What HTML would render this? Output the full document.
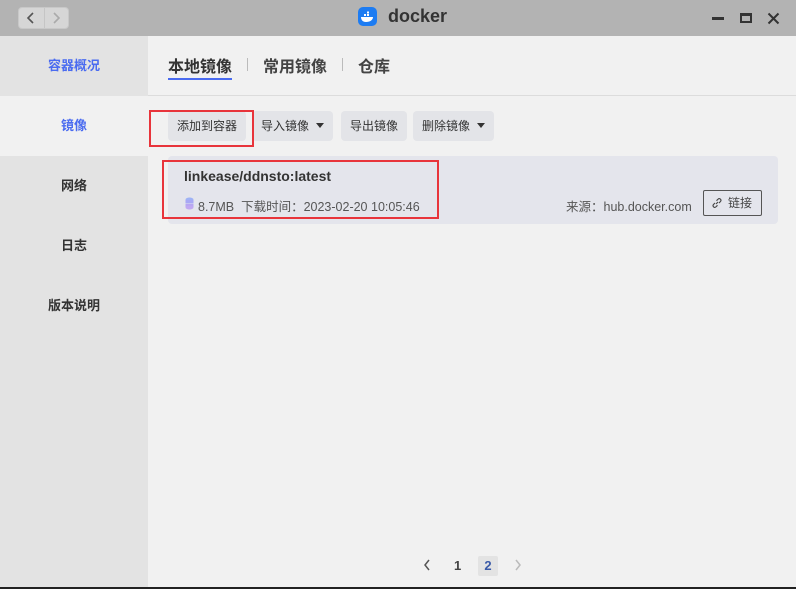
<!DOCTYPE html>
<html><head><meta charset="utf-8"><style>
*{margin:0;padding:0;box-sizing:border-box}
body{width:796px;height:589px;background:#f1f1f1;font-family:"Liberation Sans","Noto Sans CJK SC",sans-serif;position:relative;overflow:hidden;color:#333}
.abs{position:absolute}
.title{left:0;top:0;width:796px;height:36px;background:#b3b3b3}
.nav{left:18px;top:7px;width:51px;height:22px;background:#d6d6d6;border-radius:4px;border:1px solid #c8c8c8}
.side{left:0;top:36px;width:148px;height:553px;background:#e3e3e3}
.si{position:absolute;left:0;width:148px;height:60px;line-height:60px;text-align:center;font-size:13px;font-weight:bold;color:#333}
.btn{position:absolute;top:111px;height:30px;line-height:30px;background:#e3e4e8;border-radius:4px;font-size:12px;color:#333;padding:0 9px}
.tri{display:inline-block;border-left:4px solid transparent;border-right:4px solid transparent;border-top:5px solid #333;margin-left:7px;vertical-align:2px}
.red{position:absolute;border:2.5px solid #e8343b}
</style></head><body>
<div class="abs title"></div>
<div class="abs nav"><span class="abs" style="left:25px;top:0;width:1px;height:20px;background:#c5c5c5"></span>
<svg class="abs" style="left:7px;top:4px" width="10" height="12"><path d="M7 1L2 6L7 11" stroke="#555" stroke-width="1.6" fill="none"/></svg>
<svg class="abs" style="left:32px;top:4px" width="10" height="12"><path d="M3 1L8 6L3 11" stroke="#aaa" stroke-width="1.6" fill="none"/></svg></div>
<div class="abs" style="left:358px;top:7px;width:19px;height:19px;border-radius:5px;background:#1d7cf2"><svg width="19" height="19"><path d="M3 10h12c0 3-3 5-7 5s-5-3-5-5z" fill="#fff"/><rect x="6" y="7" width="2" height="2" fill="#fff"/><rect x="9" y="7" width="2" height="2" fill="#fff"/><rect x="9" y="4.5" width="2" height="2" fill="#fff"/></svg></div>
<div class="abs" style="left:388px;top:6px;font-size:18px;font-weight:bold;color:#333">docker</div>
<div class="abs" style="left:712px;top:17px;width:12px;height:2.5px;background:#333"></div>
<div class="abs" style="left:740px;top:13px;width:12px;height:10px;border:2px solid #333;border-top-width:3px"></div>
<svg class="abs" style="left:767px;top:12px" width="13" height="13"><path d="M1.5 1.5L11.5 11.5M11.5 1.5L1.5 11.5" stroke="#333" stroke-width="2"/></svg>
<div class="abs side">
<div class="si" style="top:0;color:#4a6bf0">容器概况</div>
<div class="si" style="top:60px;background:#f1f1f1;color:#4a6bf0">镜像</div>
<div class="si" style="top:120px">网络</div>
<div class="si" style="top:180px">日志</div>
<div class="si" style="top:240px">版本说明</div>
</div>
<div class="abs" style="left:168px;top:53px;font-size:16px;font-weight:bold;color:#333">本地镜像</div>
<div class="abs" style="left:168px;top:78px;width:64px;height:2px;background:#4a6bf0"></div>
<div class="abs" style="left:247px;top:58px;width:1px;height:13px;background:#bbb"></div>
<div class="abs" style="left:263px;top:53px;font-size:16px;font-weight:bold;color:#444">常用镜像</div>
<div class="abs" style="left:342px;top:58px;width:1px;height:13px;background:#bbb"></div>
<div class="abs" style="left:358px;top:53px;font-size:16px;font-weight:bold;color:#444">仓库</div>
<div class="abs" style="left:148px;top:95px;width:648px;height:1px;background:#dcdcdc"></div>
<div class="btn" style="left:168px">添加到容器</div>
<div class="btn" style="left:252px">导入镜像<span class="tri"></span></div>
<div class="btn" style="left:341px">导出镜像</div>
<div class="btn" style="left:413px">删除镜像<span class="tri"></span></div>
<div class="abs" style="left:168px;top:156px;width:610px;height:68px;background:#e4e5ec;border-radius:4px"></div>
<div class="abs" style="left:184px;top:168px;font-size:14px;font-weight:bold;color:#333">linkease/ddnsto:latest</div>
<svg class="abs" style="left:185px;top:197px" width="9" height="13"><ellipse cx="4.5" cy="2.5" rx="4" ry="2" fill="#9fb2f5"/><rect x="0.5" y="3" width="8" height="3.5" fill="#a8a8f5"/><rect x="0.5" y="7" width="8" height="3" fill="#b7a6f2"/><ellipse cx="4.5" cy="10.5" rx="4" ry="2" fill="#c0a8f2"/></svg>
<div class="abs" style="left:198px;top:196px;font-size:12.5px;color:#555">8.7MB&nbsp;&nbsp;下载时间：2023-02-20 10:05:46</div>
<div class="abs" style="left:566px;top:196px;font-size:12.5px;color:#555">来源：hub.docker.com</div>
<div class="abs" style="left:703px;top:190px;width:59px;height:26px;border:1px solid #555;border-radius:2px;font-size:12px;line-height:24px;color:#444;padding-left:24px">链接</div>
<svg class="abs" style="left:711px;top:197px" width="12" height="12"><path d="M5 7L7 5M4 6L2.5 7.5a1.7 1.7 0 0 0 2.4 2.4L6.5 8.3M5.5 3.7L7.1 2.1a1.7 1.7 0 0 1 2.4 2.4L8 6" stroke="#444" stroke-width="1.1" fill="none"/></svg>
<div class="red" style="left:149px;top:110px;width:105px;height:37px"></div>
<div class="red" style="left:162px;top:160px;width:277px;height:59px"></div>
<svg class="abs" style="left:423px;top:559px" width="8" height="12"><path d="M6 1L2 6L6 11" stroke="#555" stroke-width="1.5" fill="none"/></svg>
<div class="abs" style="left:454px;top:558px;font-size:13px;font-weight:bold;color:#444">1</div>
<div class="abs" style="left:478px;top:556px;width:20px;height:20px;background:#e3e3e3;border-radius:2px;text-align:center;line-height:20px;font-size:13px;font-weight:bold;color:#3a5aa8">2</div>
<svg class="abs" style="left:514px;top:559px" width="8" height="12"><path d="M2 1L6 6L2 11" stroke="#bbb" stroke-width="1.5" fill="none"/></svg>
<div class="abs" style="left:0;top:587px;width:796px;height:2px;background:#222"></div>
</body></html>
